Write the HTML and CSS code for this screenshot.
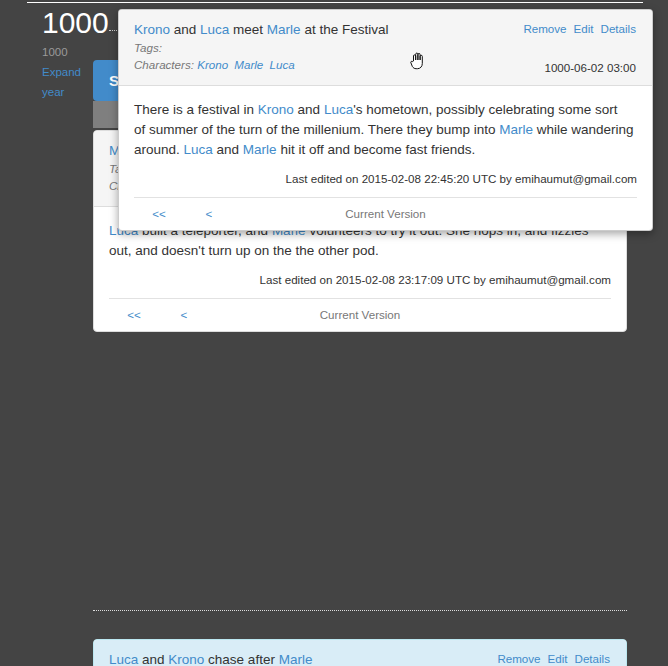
FILE: index.html
```html
<!DOCTYPE html>
<html lang="en">
<head>
<meta charset="utf-8">
<title>Timeline</title>
<link rel="stylesheet" href="styles.css">
</head>
<body>
<div class="timeline">
  <section class="year">
    <div class="year-head">
      <h1 class="year-title">1000</h1>
      <div class="year-rule"></div>
    </div>
    <div class="year-body">
      <aside class="year-side">
        <div class="year-num">1000</div>
        <a class="side-link" href="#">Expand year</a>
      </aside>
      <div class="year-main">
        <div class="summary-btn">Show all events</div>
        <div class="summary-bar"></div>
        <div class="event-wrap">
          <article class="card">
            <header class="card-head">
              <div class="card-main">
                <div class="card-title"><a href="#">Marle</a> tries out the teleporter</div>
                <div class="meta">Tags:</div>
                <div class="meta">Characters: <a href="#">Marle</a> <a href="#">Luca</a></div>
              </div>
              <div class="card-side">
                <div class="actions"><a href="#">Remove</a><a href="#">Edit</a><a href="#">Details</a></div>
                <div class="date">1000-06-03 10:00</div>
              </div>
            </header>
            <div class="card-body">
              <p class="text"><a href="#">Luca</a> built a teleporter, and <a href="#">Marle</a> volunteers to try it out. She hops in, and fizzles out, and doesn't turn up on the the other pod.</p>
              <div class="edited">Last edited on 2015-02-08 23:17:09 UTC by emihaumut@gmail.com</div>
              <hr class="rule">
              <div class="pager">
                <a href="#">&lt;&lt;</a>
                <a href="#">&lt;</a>
                <span class="current">Current Version</span>
              </div>
            </div>
          </article>

          <article class="card popup">
            <header class="card-head">
              <div class="card-main">
                <div class="card-title"><a href="#">Krono</a> and <a href="#">Luca</a> meet <a href="#">Marle</a> at the Festival</div>
                <div class="meta">Tags:</div>
                <div class="meta">Characters: <a href="#">Krono</a> <a href="#">Marle</a> <a href="#">Luca</a></div>
              </div>
              <div class="card-side">
                <div class="actions"><a href="#">Remove</a><a href="#">Edit</a><a href="#">Details</a></div>
                <div class="date">1000-06-02 03:00</div>
              </div>
            </header>
            <div class="card-body">
              <p class="text">There is a festival in <a href="#">Krono</a> and <a href="#">Luca</a>'s hometown, possibly celebrating some sort<br>of summer of the turn of the millenium. There they bump into <a href="#">Marle</a> while wandering around. <a href="#">Luca</a> and <a href="#">Marle</a> hit it off and become fast friends.</p>
              <div class="edited">Last edited on 2015-02-08 22:45:20 UTC by emihaumut@gmail.com</div>
              <hr class="rule">
              <div class="pager">
                <a href="#">&lt;&lt;</a>
                <a href="#">&lt;</a>
                <span class="current">Current Version</span>
              </div>
            </div>
            <svg class="cursor" width="18" height="20" viewBox="0 0 18 20" aria-hidden="true">
              <path d="M4.5 10 V5 a1.1 1.1 0 0 1 2.2 0 V9 V3.2 a1.1 1.1 0 0 1 2.2 0 V9 V3.6 a1.1 1.1 0 0 1 2.2 0 V9 V5.4 a1.1 1.1 0 0 1 2.2 0 V12.5 c0 3 -2 5.2 -4.8 5.2 h-1.4 c-1.8 0 -2.9 -0.9 -3.8 -2.3 L2 12 a1.1 1.1 0 0 1 1.8 -1.3 Z" fill="#fff" stroke="#111" stroke-width="1" stroke-linejoin="round"/>
            </svg>
          </article>
        </div>
      </div>
    </div>
  </section>

  <div class="year-sep"></div>

  <section class="year next">
    <article class="card info">
      <header class="card-head">
        <div class="card-main">
          <div class="card-title"><a href="#">Luca</a> and <a href="#">Krono</a> chase after <a href="#">Marle</a></div>
          <div class="meta">Tags:</div>
          <div class="meta">Characters: <a href="#">Luca</a> <a href="#">Krono</a> <a href="#">Marle</a></div>
        </div>
        <div class="card-side">
          <div class="actions"><a href="#">Remove</a><a href="#">Edit</a><a href="#">Details</a></div>
          <div class="date">1000-06-04 12:00</div>
        </div>
      </header>
    </article>
  </section>
</div>
</body>
</html>
```

FILE: styles.css
```css
* { box-sizing: border-box; }

body {
  margin: 0;
  background: #444444;
  font-family: "Liberation Sans", Arial, sans-serif;
  font-size: 13.5px;
  line-height: 20px;
  color: #333333;
  overflow: hidden;
}

a {
  color: #428bca;
  text-decoration: none;
}

.timeline {
  margin: 2px 25px 0 27px;
  border-top: 1px solid #ffffff;
  padding: 0 16px 0 15px;
}

.year-head {
  display: flex;
  align-items: flex-end;
  margin-top: 3px;
}

.year-title {
  margin: 0;
  font-size: 30px;
  line-height: 33px;
  font-weight: normal;
  color: #ffffff;
}

.year-rule {
  flex: 1;
  border-bottom: 1px dotted #cfcfcf;
  margin-bottom: 8px;
}

.year-body {
  display: grid;
  grid-template-columns: 51px 534px;
  margin-top: 3px;
  min-height: 568px;
}

.year-side {
  font-size: 11.5px;
  line-height: 20px;
}

.year-num {
  color: #9a9a9a;
}

.side-link {
  display: block;
}

.year-main {
  padding-top: 18px;
}

.summary-btn {
  background: #428bca;
  color: #ffffff;
  font-weight: bold;
  font-size: 15px;
  line-height: 21px;
  padding: 10px 16px;
  border-radius: 4px;
  white-space: nowrap;
}

.summary-bar {
  background: #7f7f7f;
  height: 27px;
  margin-bottom: 2px;
}

.event-wrap {
  position: relative;
}

.card {
  background: #ffffff;
  border: 1px solid #dddddd;
  border-radius: 4px;
}

.card-head {
  display: flex;
  justify-content: space-between;
  background: #f5f5f5;
  border-bottom: 1px solid #dddddd;
  border-radius: 3px 3px 0 0;
  padding: 10px 16px 11px 15px;
}

.card-title {
  line-height: 20px;
}

.meta {
  font-size: 11.6px;
  line-height: 16.8px;
  font-style: italic;
  color: #777777;
}

.meta a {
  margin-right: 3px;
}

.card-side {
  display: flex;
  flex-direction: column;
  justify-content: space-between;
  align-items: flex-end;
  font-size: 11.6px;
}

.actions {
  line-height: 17px;
  display: flex;
  gap: 7px;
}

.date {
  line-height: 20px;
  margin-bottom: -4px;
}

.card-body {
  padding: 14px 15px 6px;
}

.text {
  margin: 0;
}

.edited {
  margin-top: 10px;
  text-align: right;
  font-size: 11.6px;
  line-height: 17px;
}

.rule {
  border: 0;
  border-top: 1px solid #e2e2e2;
  margin: 10px 0 6px;
}

.pager {
  display: grid;
  grid-template-columns: 50px 50px 1fr 50px 50px;
  text-align: center;
  font-size: 11.6px;
  line-height: 20px;
}

.current {
  color: #777777;
}

.popup {
  position: absolute;
  top: -121px;
  left: 25px;
  width: 535px;
  z-index: 2;
  border-color: rgba(0, 0, 0, 0.2);
  box-shadow: 0 3px 8px rgba(0, 0, 0, 0.35);
}

.cursor {
  position: absolute;
  left: 290px;
  top: 41px;
}

.year-sep {
  margin-left: 51px;
  border-top: 1px dotted #dddddd;
}

.next {
  margin-top: 28px;
  margin-left: 51px;
}

.info {
  border-color: #bce8f1;
}

.info .card-head {
  background: #d9edf7;
  border-bottom-color: #bce8f1;
}
```
